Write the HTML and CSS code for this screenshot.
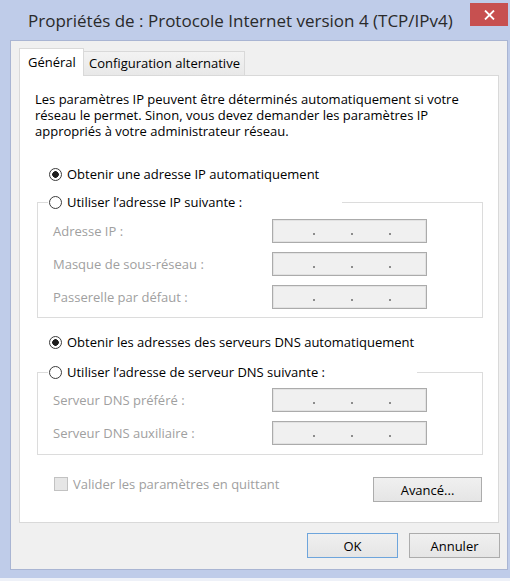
FILE: index.html
```html
<!DOCTYPE html>
<html lang="fr">
<head>
<meta charset="utf-8">
<title>Propriétés de : Protocole Internet version 4 (TCP/IPv4)</title>
<link rel="stylesheet" href="styles.css">
</head>
<body>
<div class="window">
  <div class="titlebar">
    <div class="title">Propriétés de : Protocole Internet version 4 (TCP/IPv4)</div>
    <div class="close">
      <svg width="11" height="10" viewBox="0 0 11 10"><path d="M1 0.5 L10 9.5 M10 0.5 L1 9.5" stroke="#fff" stroke-width="1.8" fill="none"/></svg>
    </div>
  </div>
  <div class="client">
    <div class="tabs">
      <div class="tab active">Général</div>
      <div class="tab inactive">Configuration alternative</div>
    </div>
    <div class="panel">
      <p class="desc">Les paramètres IP peuvent être déterminés automatiquement si votre<br>réseau le permet. Sinon, vous devez demander les paramètres IP<br>appropriés à votre administrateur réseau.</p>
      <div class="opt opt-ip-auto"><span class="radio checked"></span>Obtenir une adresse IP automatiquement</div>
      <fieldset class="group group-ip">
        <legend class="legend legend-ip"><span class="radio"></span>Utiliser l’adresse IP suivante :</legend>
        <div class="fields">
          <span class="label">Adresse IP :</span>
          <span class="ipbox"><i></i><i></i><i></i></span>
          <span class="label">Masque de sous-réseau :</span>
          <span class="ipbox"><i></i><i></i><i></i></span>
          <span class="label">Passerelle par défaut :</span>
          <span class="ipbox"><i></i><i></i><i></i></span>
        </div>
      </fieldset>
      <div class="opt opt-dns-auto"><span class="radio checked"></span>Obtenir les adresses des serveurs DNS automatiquement</div>
      <fieldset class="group group-dns">
        <legend class="legend legend-dns"><span class="radio"></span>Utiliser l’adresse de serveur DNS suivante :</legend>
        <div class="fields">
          <span class="label">Serveur DNS préféré :</span>
          <span class="ipbox"><i></i><i></i><i></i></span>
          <span class="label">Serveur DNS auxiliaire :</span>
          <span class="ipbox"><i></i><i></i><i></i></span>
        </div>
      </fieldset>
      <div class="bottom">
        <div class="check"><span class="box"></span>Valider les paramètres en quittant</div>
        <button class="btn btn-adv">Avancé...</button>
      </div>
    </div>
    <div class="actions">
      <button class="btn btn-ok">OK</button>
      <button class="btn">Annuler</button>
    </div>
  </div>
</div>
</body>
</html>
```

FILE: styles.css
```css
* { box-sizing: border-box; }
html, body { margin: 0; padding: 0; }
body {
  width: 510px;
  height: 581px;
  overflow: hidden;
  background: #eef1f8;
  font-family: "Open Sans", "Noto Sans", sans-serif;
  font-size: 13px;
  color: #000;
}
.window {
  height: 578px;
  background: #bfcce9;
  padding: 0 2px 8px 10px;
  display: flex;
  flex-direction: column;
}
.titlebar {
  height: 40px;
  display: flex;
  align-items: flex-start;
  justify-content: space-between;
  flex: none;
}
.title {
  padding: 9px 0 0 18px;
  font-size: 17px;
  line-height: 24px;
  color: #2a2a2a;
  white-space: nowrap;
}
.close {
  margin-top: 3px;
  width: 38px;
  height: 23px;
  background: #c75050;
  display: flex;
  align-items: center;
  justify-content: center;
}
.client {
  flex: 1;
  background: #f0f0f0;
  border: 1px solid #a9b5d3;
  padding: 7px 8px 0 8px;
  display: flex;
  flex-direction: column;
}
.tabs {
  display: flex;
  align-items: flex-end;
  height: 28px;
  margin-bottom: -1px;
  position: relative;
  z-index: 1;
}
.tab {
  white-space: nowrap;
  border: 1px solid #d9d9d9;
  border-bottom: none;
}
.tab.active {
  width: 65px;
  height: 28px;
  line-height: 27px;
  padding-left: 8px;
  background: #fff;
}
.tab.inactive {
  width: 161px;
  height: 24px;
  line-height: 23px;
  padding-left: 5px;
  margin-bottom: 1px;
  border-left: none;
  background: linear-gradient(#f3f3f3, #e8e8e8);
}
.panel {
  flex: none;
  height: 448px;
  background: #fff;
  border: 1px solid #d9d9d9;
  padding: 15px 15px 0 15px;
  display: flex;
  flex-direction: column;
}
.desc {
  margin: 0;
  line-height: 16px;
  white-space: nowrap;
}
.opt {
  display: flex;
  align-items: center;
  height: 16px;
  line-height: 16px;
  margin-left: 14px;
  white-space: nowrap;
}
.opt-ip-auto { margin-top: 27px; }
.opt-dns-auto { margin-top: 16px; }
.radio {
  flex: none;
  display: inline-block;
  width: 13px;
  height: 13px;
  border-radius: 50%;
  border: 1px solid #3c3c3c;
  background: #fff;
  margin-right: 5px;
}
.radio.checked {
  background: radial-gradient(circle, #1e1e1e 0 3px, #fff 3.6px);
}
.group {
  margin: 0 0 0 2px;
  border: 1px solid #dcdcdc;
  padding: 9px 0 8px 10px;
  min-width: 0;
}
.group-ip { margin-top: 12px; }
.group-dns { margin-top: 14px; padding-top: 8px; padding-bottom: 9px; }
.legend {
  padding: 0;
  height: 16px;
  line-height: 16px;
  display: flex;
  align-items: center;
  white-space: nowrap;
  padding-left: 1px;
}
.legend-ip { width: 294px; }
.legend-dns { width: 369px; }
.fields {
  display: grid;
  grid-template-columns: 219px 155px;
  row-gap: 9px;
  align-items: center;
  padding-left: 5px;
}
.label {
  color: #a0a0a0;
  white-space: nowrap;
}
.ipbox {
  height: 24px;
  background: #f0f0f0;
  border: 1px solid #ababab;
  box-shadow: inset 0 0 0 1px #e2e2e2;
  display: flex;
  align-items: flex-end;
  padding: 0 0 7px 40px;
  gap: 36px;
}
.ipbox i {
  display: block;
  width: 2px;
  height: 2px;
  background: #8c8c8c;
}
.bottom {
  margin-top: 22px;
  padding: 0 1px 0 19px;
  display: flex;
  justify-content: space-between;
  align-items: flex-start;
}
.check {
  display: flex;
  align-items: center;
  height: 14px;
  line-height: 14px;
  color: #a0a0a0;
  white-space: nowrap;
}
.box {
  width: 14px;
  height: 14px;
  border: 1px solid #c2c2c2;
  background: #e6e6e6;
  margin-right: 5px;
}
.btn {
  height: 25px;
  width: 91px;
  padding: 0;
  border: 1px solid #acacac;
  background: linear-gradient(#f0f0f0, #e5e5e5);
  font-family: inherit;
  font-size: 13px;
  color: #000;
}
.btn-adv { width: 109px; }
.btn-ok { border-color: #6ea5dc; }
.actions {
  margin-top: 10px;
  margin-right: -1px;
  display: flex;
  justify-content: flex-end;
  gap: 11px;
}
```
